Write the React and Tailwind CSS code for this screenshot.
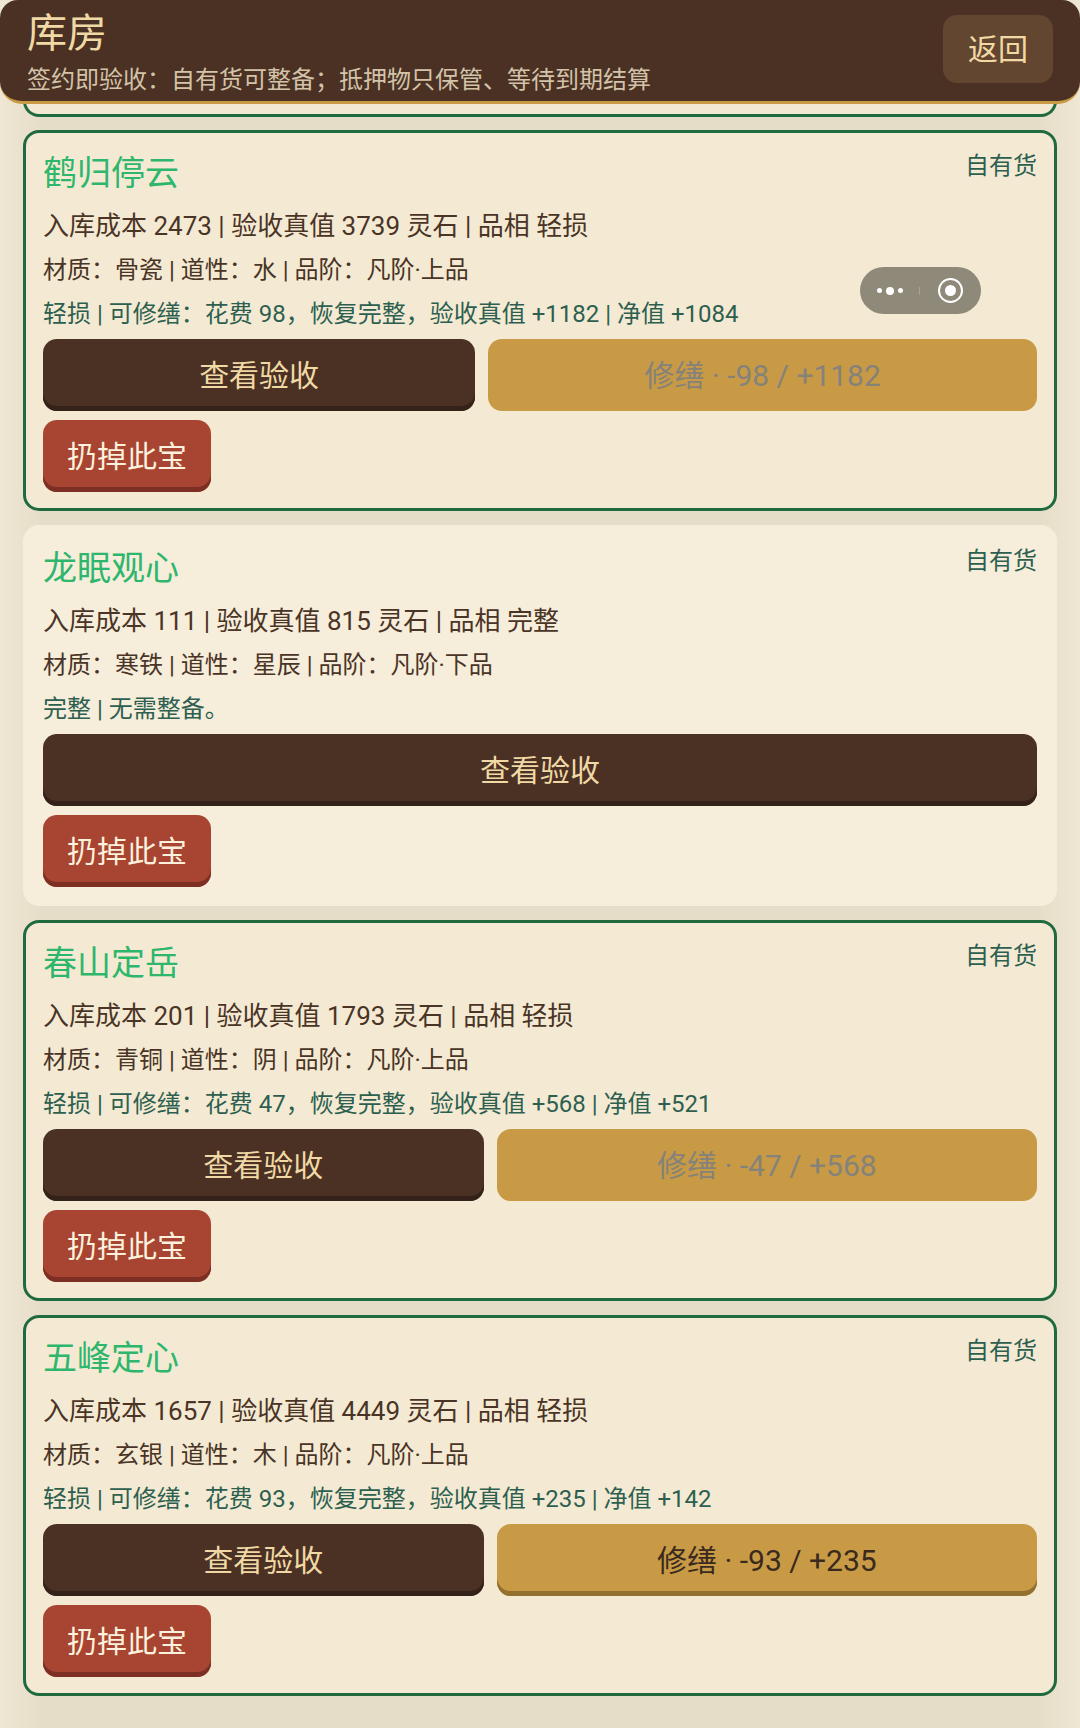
import React from 'react'

const items = [
  {
    name: '鹤归停云',
    line1: '入库成本 2473 | 验收真值 3739 灵石 | 品相 轻损',
    line2: '材质：骨瓷 | 道性：水 | 品阶：凡阶·上品',
    line3: '轻损 | 可修缮：花费 98，恢复完整，验收真值 +1182 | 净值 +1084',
    repair: '修缮 · -98 / +1182',
    disabled: true,
    outlined: true,
  },
  {
    name: '龙眠观心',
    line1: '入库成本 111 | 验收真值 815 灵石 | 品相 完整',
    line2: '材质：寒铁 | 道性：星辰 | 品阶：凡阶·下品',
    line3: '完整 | 无需整备。',
    outlined: false,
  },
  {
    name: '春山定岳',
    line1: '入库成本 201 | 验收真值 1793 灵石 | 品相 轻损',
    line2: '材质：青铜 | 道性：阴 | 品阶：凡阶·上品',
    line3: '轻损 | 可修缮：花费 47，恢复完整，验收真值 +568 | 净值 +521',
    repair: '修缮 · -47 / +568',
    disabled: true,
    outlined: true,
  },
  {
    name: '五峰定心',
    line1: '入库成本 1657 | 验收真值 4449 灵石 | 品相 轻损',
    line2: '材质：玄银 | 道性：木 | 品阶：凡阶·上品',
    line3: '轻损 | 可修缮：花费 93，恢复完整，验收真值 +235 | 净值 +142',
    repair: '修缮 · -93 / +235',
    disabled: false,
    outlined: true,
  },
]

function ItemCard({ item }) {
  return (
    <div
      className={`relative rounded-[16px] border-[3px] px-[17px] pt-[17px] pb-[16px] ${
        item.outlined ? 'border-[#1f6b3f] bg-[#f4ead3]' : 'border-transparent bg-[#f6eddb]'
      }`}
    >
      <div className="flex items-start justify-between">
        <div className="text-[34px] leading-[46px] text-[#2eb66c]">{item.name}</div>
        <div className="text-[24px] leading-[32px] text-[#2d5f50]">自有货</div>
      </div>
      <div className="mt-[8px] text-[26px] leading-[44px] text-[#4a3426]">{item.line1}</div>
      <div className="text-[24px] leading-[44px] text-[#4a3426]">{item.line2}</div>
      <div className="text-[24px] leading-[44px] text-[#2d5f50]">{item.line3}</div>
      <div className="mt-[3px] flex gap-[13px]">
        <button className="h-[72px] grow rounded-[14px] bg-[#4a3124] px-[24px] text-[30px] text-[#f0d9a4] shadow-[inset_0_-5px_0_#34221a]">
          查看验收
        </button>
        {item.repair && (
          <button
            className={`h-[72px] grow rounded-[14px] bg-[#c89a45] px-[24px] text-[30px] ${
              item.disabled ? 'text-[#85827a]' : 'text-[#3a2a1e] shadow-[inset_0_-5px_0_#94702f]'
            }`}
          >
            {item.repair}
          </button>
        )}
      </div>
      <button className="mt-[9px] block h-[72px] rounded-[14px] bg-[#a84432] px-[24px] text-[30px] text-[#fbf1dc] shadow-[inset_0_-5px_0_#7c2f22]">
        扔掉此宝
      </button>
    </div>
  )
}

export default function App() {
  return (
    <div
      className="relative h-[1728px] w-[1080px] overflow-hidden bg-[linear-gradient(90deg,#efe7d3_0%,#e6ddc8_4%,#e6ddc8_96%,#efe7d3_100%)]"
      style={{ fontFamily: 'Roboto, "Noto Sans CJK SC", sans-serif' }}
    >
      {/* Title bar */}
      <div className="relative z-10 flex h-[104px] items-start justify-between rounded-b-[22px] rounded-t-[18px] border-b-[3px] border-[#c89a45] bg-[#4a3124] pl-[27px] pr-[27px]">
        <div>
          <div className="pt-[8px] text-[40px] leading-[52px] text-[#f0d9a4]">库房</div>
          <div className="mt-[4px] text-[24px] leading-[32px] text-[#d3c3a8]">
            签约即验收：自有货可整备；抵押物只保管、等待到期结算
          </div>
        </div>
        <button className="mt-[15px] h-[68px] w-[110px] rounded-[14px] bg-[#634630] text-[30px] text-[#f0d9a4]">
          返回
        </button>
      </div>

      {/* Previous card, scrolled under the title bar */}
      <div className="mx-[23px] -mt-[4px] h-[17px] rounded-b-[16px] border-x-[3px] border-b-[3px] border-[#1f6b3f] bg-[#f4ead3]" />

      <div className="mx-[23px] mt-[13px] flex flex-col gap-[14px]">
        {items.map((item) => (
          <ItemCard key={item.name} item={item} />
        ))}
      </div>

      {/* Floating capsule */}
      <div className="absolute left-[860px] top-[267px] z-20 flex h-[47px] w-[121px] items-center rounded-full bg-[#8f897a]">
        <div className="flex w-[60px] items-center justify-center gap-[4px] border-r border-[#a8a294]">
          <span className="h-[5px] w-[5px] rounded-full bg-white" />
          <span className="h-[8px] w-[8px] rounded-full bg-white" />
          <span className="h-[5px] w-[5px] rounded-full bg-white" />
        </div>
        <div className="flex flex-1 items-center justify-center">
          <span className="flex h-[25px] w-[25px] items-center justify-center rounded-full border-[2px] border-white">
            <span className="h-[11px] w-[11px] rounded-full bg-white" />
          </span>
        </div>
      </div>
    </div>
  )
}
